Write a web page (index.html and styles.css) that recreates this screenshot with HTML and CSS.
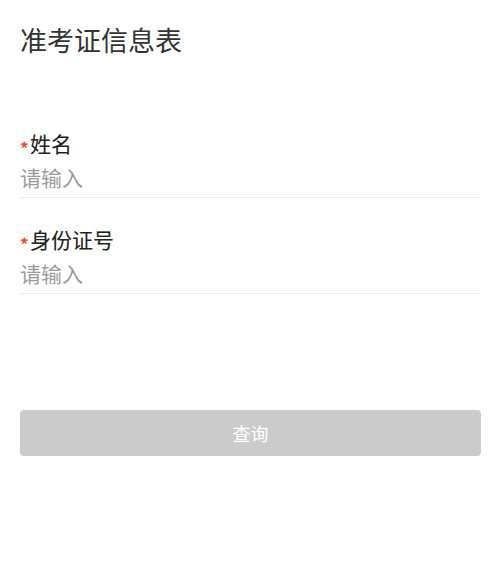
FILE: index.html
```html
<!DOCTYPE html>
<html lang="zh">
<head>
<meta charset="utf-8">
<link rel="stylesheet" href="styles.css">
</head>
<body>
<div class="page">
  <h1 class="title">准考证信息表</h1>
  <div class="form">
    <div class="field">
      <div class="label"><span class="req">*</span>姓名</div>
      <div class="input">请输入</div>
    </div>
    <div class="field">
      <div class="label"><span class="req">*</span>身份证号</div>
      <div class="input">请输入</div>
    </div>
  </div>
  <button class="btn">查询</button>
</div>
</body>
</html>
```
FILE: styles.css
```css
html, body {
  margin: 0;
  padding: 0;
  background: #fff;
}
body {
  font-family: "Noto Sans CJK SC", "Noto Sans", sans-serif;
  color: #333;
}
.page {
  padding: 0 20px;
}
.title {
  margin: 0;
  padding-top: 24px;
  font-size: 27px;
  line-height: 32px;
  font-weight: 400;
  color: #333;
}
.form {
  padding-top: 73px;
}
.field {
  display: flex;
  flex-direction: column;
}
.field + .field {
  margin-top: 27px;
}
.label {
  height: 28px;
  font-size: 21px;
  line-height: 28px;
  font-weight: 400;
  color: #222;
  -webkit-text-stroke: 0.1px #222;
}
.req {
  display: inline-block;
  width: 10px;
  color: #ee4a2a;
  font-size: 17px;
  line-height: 1;
  font-weight: 700;
  vertical-align: -3px;
  -webkit-text-stroke: 0;
}
.input {
  font-size: 21px;
  line-height: 28px;
  color: #9c9c9c;
  padding: 6px 0 6px;
  border-bottom: 1px solid #eee;
}
.btn {
  display: block;
  width: 100%;
  margin-top: 116px;
  height: 46px;
  border: 0;
  border-radius: 4px;
  background: #cbcbcb;
  color: #fff;
  font-family: inherit;
  font-size: 18px;
}
```
